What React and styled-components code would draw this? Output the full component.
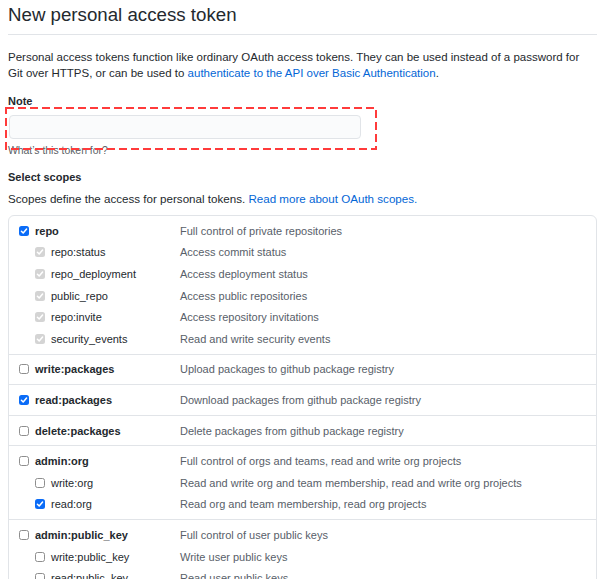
import React from 'react'
import styled, { createGlobalStyle } from 'styled-components';

const GlobalStyle = createGlobalStyle`
    body {
        margin: 0;
        background: #FFFFFF;
        font-family: "Liberation Sans", Arial, Helvetica, sans-serif;
        color: #24292E;
    }
`;

const Page = styled.div`
    padding: 0 13px 0 8px;
`;

const Title = styled.h1`
    font-size: 18.7px;
    font-weight: normal;
    line-height: 25px;
    margin: 0;
    padding: 2px 0 7px;
    border-bottom: 1px solid #E1E4E8;
`;

const Intro = styled.p`
    font-size: 11.5px;
    line-height: 16px;
    margin: 14px 0 0;
`;

const Link = styled.a`
    color: #0366D6;
    text-decoration: none;
`;

const NoteField = styled.div`
    position: relative;
    margin-top: 12px;
`;

const Label = styled.div`
    font-size: 11px;
    font-weight: bold;
    line-height: 16px;
`;

const Input = styled.input`
    display: block;
    box-sizing: border-box;
    width: 352px;
    height: 24px;
    margin: 6px 0 0 1px;
    border: 1px solid #E1E4E8;
    border-radius: 4px;
    background: #FAFBFC;
    outline: none;
`;

const Hint = styled.div`
    font-size: 10.4px;
    line-height: 13px;
    color: #5A5F66;
    margin-top: 5px;
`;

const Annotation = styled.svg`
    position: absolute;
    left: -3px;
    top: 14px;
    width: 372px;
    height: 43px;
    pointer-events: none;
`;

const SectionTitle = styled(Label)`
    margin-top: 12px;
`;

const SectionText = styled.p`
    font-size: 11.6px;
    line-height: 16px;
    margin: 6px 0 0;
`;

const ScopeBox = styled.div`
    margin-top: 8px;
    border: 1px solid #E1E4E8;
    border-radius: 6px;
`;

const Group = styled.div`
    padding: 4px 0;
    & + & {
        border-top: 1px solid #E1E4E8;
    }
`;

const Row = styled.div`
    display: grid;
    grid-template-columns: 161px 1fr;
    align-items: center;
    height: 21.6px;
    padding-left: 10px;
    font-size: 11px;
`;

const ScopeName = styled.div`
    display: flex;
    align-items: center;
    gap: 6px;
    padding-left: ${p => (p.$sub ? '16px' : '0')};
    font-weight: ${p => (p.$sub ? 'normal' : 'bold')};
    color: #24292E;
`;

const Box = styled.span`
    flex: none;
    box-sizing: border-box;
    width: 10px;
    height: 10px;
    border-radius: 2.5px;
    display: flex;
    align-items: center;
    justify-content: center;
    background: ${p => (p.$state === 'checked' ? '#0B6CF7' : p.$state === 'locked' ? '#D4D4D4' : '#FFFFFF')};
    border: ${p => (p.$state === 'off' ? '1px solid #8E8E8E' : 'none')};
`;

const Description = styled.div`
    color: #586069;
    white-space: nowrap;
`;

const Check = ({ state }) => (
    <Box $state={state}>
        {state !== 'off' && (
            <svg width="8" height="8" viewBox="0 0 9 9">
                <path d="M1.6 4.7 L3.6 6.7 L7.4 2.2" fill="none" stroke="#FFFFFF" strokeWidth="1.7" strokeLinecap="round" strokeLinejoin="round" />
            </svg>
        )}
    </Box>
);

const groups = [
    [
        ['repo', 'Full control of private repositories', 'checked', false],
        ['repo:status', 'Access commit status', 'locked', true],
        ['repo_deployment', 'Access deployment status', 'locked', true],
        ['public_repo', 'Access public repositories', 'locked', true],
        ['repo:invite', 'Access repository invitations', 'locked', true],
        ['security_events', 'Read and write security events', 'locked', true],
    ],
    [['write:packages', 'Upload packages to github package registry', 'off', false]],
    [['read:packages', 'Download packages from github package registry', 'checked', false]],
    [['delete:packages', 'Delete packages from github package registry', 'off', false]],
    [
        ['admin:org', 'Full control of orgs and teams, read and write org projects', 'off', false],
        ['write:org', 'Read and write org and team membership, read and write org projects', 'off', true],
        ['read:org', 'Read org and team membership, read org projects', 'checked', true],
    ],
    [
        ['admin:public_key', 'Full control of user public keys', 'off', false],
        ['write:public_key', 'Write user public keys', 'off', true],
        ['read:public_key', 'Read user public keys', 'off', true],
    ],
    [
        ['admin:repo_hook', 'Full control of repository hooks', 'off', false],
        ['write:repo_hook', 'Write repository hooks', 'off', true],
        ['read:repo_hook', 'Read repository hooks', 'off', true],
    ],
];

const App = () => {
    return (
        <Page>
            <GlobalStyle />
            <Title>New personal access token</Title>
            <Intro>
                Personal access tokens function like ordinary OAuth access tokens. They can be used instead of a password for
                Git over HTTPS, or can be used to <Link href="#">authenticate to the API over Basic Authentication</Link>.
            </Intro>

            <NoteField>
                <Label>Note</Label>
                <Input type="text" />
                <Hint>What’s this token for?</Hint>
                <Annotation viewBox="0 0 372 43">
                    <rect x="1" y="1" width="370" height="41" fill="none" stroke="#FF3B3B" strokeWidth="2" strokeDasharray="8 4" />
                </Annotation>
            </NoteField>

            <SectionTitle>Select scopes</SectionTitle>
            <SectionText>
                Scopes define the access for personal tokens. <Link href="#">Read more about OAuth scopes.</Link>
            </SectionText>

            <ScopeBox>
                {groups.map((rows, i) => (
                    <Group key={i}>
                        {rows.map(([name, desc, state, sub]) => (
                            <Row key={name}>
                                <ScopeName $sub={sub}>
                                    <Check state={state} />
                                    {name}
                                </ScopeName>
                                <Description>{desc}</Description>
                            </Row>
                        ))}
                    </Group>
                ))}
            </ScopeBox>
        </Page>
    )
}

export default App;
